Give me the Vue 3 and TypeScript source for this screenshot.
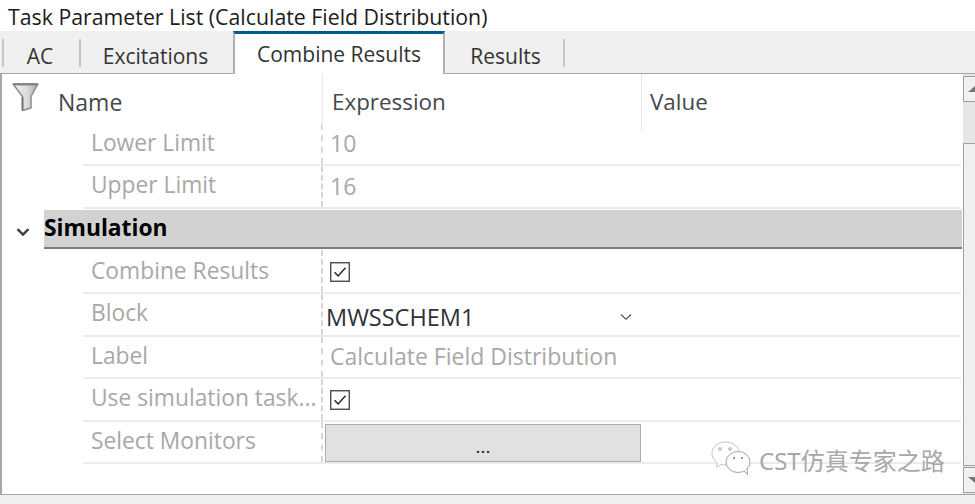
<script setup lang="ts">
interface Row { name: string; kind: 'text' | 'check' | 'select' | 'button'; value?: string; h: number }
const tabs = ['AC', 'Excitations', 'Combine Results', 'Results']
const top: Row[] = [
  { name: 'Lower Limit', kind: 'text', value: '10', h: 42 },
  { name: 'Upper Limit', kind: 'text', value: '16', h: 43 },
]
const sim: Row[] = [
  { name: 'Combine Results', kind: 'check', h: 44 },
  { name: 'Block', kind: 'select', value: 'MWSSCHEM1', h: 43 },
  { name: 'Label', kind: 'text', value: 'Calculate Field Distribution', h: 42 },
  { name: 'Use simulation task...', kind: 'check', h: 43 },
  { name: 'Select Monitors', kind: 'button', h: 42 },
]
</script>

<template>
  <div class="page">
    <div class="title">Task Parameter List (Calculate Field Distribution)</div>
    <div class="tabs">
      <div v-for="t in tabs" :key="t" class="tab" :class="{ active: t === 'Combine Results', ac: t === 'AC', exc: t === 'Excitations', res: t === 'Results' }">{{ t }}</div>
    </div>
    <div class="panel">
      <div class="main">
        <div class="head">
          <div class="hname">
            <svg class="funnel" width="30" height="30" viewBox="0 0 30 30">
              <defs>
                <linearGradient id="fg" x1="0" x2="1" y1="0" y2="0">
                  <stop offset="0" stop-color="#f4f4f4" />
                  <stop offset="0.6" stop-color="#d8d8d8" />
                  <stop offset="1" stop-color="#a4a4a4" />
                </linearGradient>
              </defs>
              <path d="M1 2H26L19 14.500V26L10.500 28.500V14.500Z" fill="url(#fg)" stroke="#8e8e8e" stroke-width="1.500" stroke-linejoin="round" />
              <path d="M1.500 2.300H25.500" stroke="#808080" stroke-width="2.200" />
              <path d="M10.500 15V28" stroke="#6c6c6c" stroke-width="1.700" />
            </svg>
            <span class="nm">Name</span>
          </div>
          <div class="hexpr">Expression</div>
          <div class="hval">Value</div>
        </div>

        <div v-for="r in top" :key="r.name" class="row" :style="{ height: r.h + 'px' }">
          <div class="name">{{ r.name }}</div>
          <div class="val"><span class="gray num">{{ r.value }}</span></div>
        </div>

        <div class="group">
          <svg class="chev" width="14" height="10" viewBox="0 0 14 10">
            <path d="M1.500 2.200 7 7.500 12.500 2.200" fill="none" stroke="#3c3c3c" stroke-width="2.400" />
          </svg>
          <div class="gbar">Simulation</div>
        </div>

        <div v-for="r in sim" :key="r.name" class="row" :class="{ first: r.name === 'Combine Results' }" :style="{ height: r.h + 'px' }">
          <div class="name">{{ r.name }}</div>
          <div class="val">
            <span v-if="r.kind === 'text'" class="gray">{{ r.value }}</span>
            <span v-else-if="r.kind === 'check'" class="check">
              <svg width="20" height="20" viewBox="0 0 20 20">
                <rect x="0.750" y="0.750" width="18.500" height="18.500" fill="#fff" stroke="#3f3f3f" stroke-width="1.300" />
                <path d="M4.500 10.200 8.200 14 15.500 5.800" fill="none" stroke="#2b2b2b" stroke-width="1.500" />
              </svg>
            </span>
            <div v-else-if="r.kind === 'select'" class="select">
              <span>{{ r.value }}</span>
              <svg width="12" height="8" viewBox="0 0 12 8">
                <path d="M1 1.500 6 6.300 11 1.500" fill="none" stroke="#444" stroke-width="1.100" />
              </svg>
            </div>
            <div v-else class="btn">...</div>
          </div>
        </div>
      </div>

      <div class="scroll">
        <div class="sbtn up"><i></i></div>
        <div class="thumb"></div>
        <div class="sbtn down"><i></i></div>
      </div>

      <div class="mark">
        <svg width="42" height="36" viewBox="0 0 42 36">
          <path d="M14.500 1C7 1 1 6 1 12.500c0 3.600 2 6.600 5 8.800L5.500 26l5-2.600c1.500.4 3 .6 4.500.6" fill="#fff" stroke="#c4c4c4" stroke-width="1" />
          <path d="M14.500 1C20.500 1 26 4.500 28 9.500" fill="none" stroke="#c4c4c4" stroke-width="1" />
          <ellipse cx="27" cy="21" rx="12" ry="10.500" fill="#fff" stroke="#a4a4a4" stroke-width="1" />
          <path d="M33 30 36.500 33.500 36 27" fill="#fff" stroke="#a4a4a4" stroke-width="1" />
          <circle cx="9" cy="8" r="1.300" fill="none" stroke="#aaa" />
          <circle cx="19" cy="8" r="1.300" fill="none" stroke="#aaa" />
          <circle cx="23" cy="17" r="1.200" fill="#999" />
          <circle cx="31" cy="17" r="1.200" fill="#999" />
        </svg>
        <span>CST仿真专家之路</span>
      </div>
    </div>
    <div class="foot"></div>
  </div>
</template>

<style>
html, body { margin: 0; padding: 0; background: #fff; }
</style>

<style scoped>
.page {
  width: 975px;
  height: 504px;
  overflow: hidden;
  display: flex;
  flex-direction: column;
  font-family: "Open Sans", "Noto Sans", sans-serif;
  background: #f0f0f0;
  color: #3c4043;
}
.title {
  height: 31px;
  flex: none;
  background: #fff;
  padding-left: 8px;
  font-size: 21.300px;
  line-height: 33px;
  color: #1b1b1b;
  white-space: nowrap;
}
.tabs {
  height: 43px;
  flex: none;
  display: flex;
  background: #f0f0f0;
  box-sizing: border-box;
  padding-left: 2px;
  border-bottom: 1px solid #a5a5a5;
}
.tab {
  position: relative;
  font-size: 21px;
  text-align: center;
  box-sizing: border-box;
  white-space: nowrap;
  color: #333;
  border-left: 2px solid #c6c6c6;
  height: 28px;
  margin-top: 8px;
  line-height: 34px;
}
.tab.ac { width: 77px; padding-right: 3px; }
.tab.exc { width: 154px; padding-right: 3px; }
.tab.res { width: 120px; border-left: none; border-right: 2px solid #c6c6c6; padding-left: 3px; }
.tab.active {
  width: 212px;
  height: 43px;
  margin-top: 0;
  background: #fff;
  border: 2px solid #b0b0b0;
  border-top: 3px solid #005a8e;
  border-bottom: none;
  line-height: 40px;
  z-index: 1;
}
.panel {
  position: relative;
  flex: none;
  height: 421px;
  box-sizing: border-box;
  background: #fff;
  border-left: 2px solid #a8a8a8;
  border-bottom: 1px solid #a5a5a5;
  display: flex;
}
.main {
  flex: 1;
  min-width: 0;
  display: flex;
  flex-direction: column;
}
.head {
  height: 50px;
  flex: none;
  display: grid;
  grid-template-columns: 321px 319px 1fr;
  font-size: 22.400px;
  line-height: 56px;
  color: #43484c;
}
.hname { position: relative; padding-left: 56px; border-right: 1px solid #e6e6e6; }
.nm { font-size: 23px; }
.funnel { position: absolute; left: 10px; top: 8px; }
.hexpr { padding-left: 9px; border-right: 1px solid #e6e6e6; }
.hval { padding-left: 8px; }
.row {
  margin-left: 81px;
  margin-right: 1px;
  flex: none;
  display: grid;
  grid-template-columns: 240px 1fr;
  box-sizing: border-box;
  border-bottom: 2px solid #ebebeb;
  font-size: 22.800px;
  color: #a8a8a8;
}
.name {
  padding-left: 8px;
  line-height: 38px;
  white-space: nowrap;
  overflow: hidden;
  border-right: 2px dashed #d6d6d6;
}
.first .name { padding-top: 2px; }
.val {
  position: relative;
  padding-left: 6px;
  display: flex;
  align-items: center;
}
.gray { line-height: 38px; position: relative; top: -1px; padding-left: 1px; font-size: 23px; }
.check { display: flex; margin-left: 1px; margin-top: 1px; }
.check svg { display: block; }
.select {
  width: 306px;
  margin-left: -3px;
  display: flex;
  align-items: center;
  justify-content: space-between;
  color: #2d3236;
  font-size: 23.500px;
  position: relative;
  top: 2px;
}
.btn {
  width: 316px;
  height: 38px;
  margin-left: -4px;
  margin-top: 2px;
  box-sizing: border-box;
  background: #e1e1e1;
  border: 1px solid #adadad;
  color: #222;
  text-align: center;
  font-size: 19px;
  line-height: 43px;
}
.group {
  height: 41px;
  flex: none;
  display: flex;
  box-sizing: border-box;
  padding-top: 1px;
  position: relative;
}
.chev { position: absolute; left: 14px; top: 18px; }
.gbar {
  margin-left: 42px;
  flex: 1;
  background: #d2d2d2;
  border-bottom: 2px solid #7d7d7d;
  font-weight: 700;
  font-size: 22.800px;
  line-height: 36px;
  color: #000;
  box-sizing: border-box;
  height: 39px;
}
.scroll {
  width: 12px;
  flex: none;
  position: relative;
  background: #e6e6e6;
  border-left: 1px solid #fff;
}
.sbtn {
  position: absolute;
  left: 0;
  right: 0;
  height: 26px;
  background: #f0f0f0;
  box-sizing: border-box;
  border: 1px solid #a0a0a0;
  border-right: none;
}
.up { top: 2px; }
.down { bottom: 1px; }
.sbtn i {
  position: absolute;
  left: 4px;
  top: 9px;
  width: 0;
  height: 0;
  border-left: 7px solid transparent;
}
.up i { border-bottom: 6px solid #777; }
.down i { border-top: 6px solid #777; }
.thumb {
  position: absolute;
  left: 0;
  right: 0;
  top: 69px;
  bottom: 28px;
  background: #f0f0f0;
  border: 1px solid #a0a0a0;
  border-right: none;
  box-sizing: border-box;
}
.mark {
  position: absolute;
  left: 709px;
  top: 367px;
  display: flex;
  align-items: center;
  gap: 6px;
  color: #a8a8a8;
  font-family: "Noto Sans", "Noto Sans CJK SC", sans-serif;
  font-size: 24px;
  white-space: nowrap;
}
.foot { flex: 1; background: #f0f0f0; }
</style>
